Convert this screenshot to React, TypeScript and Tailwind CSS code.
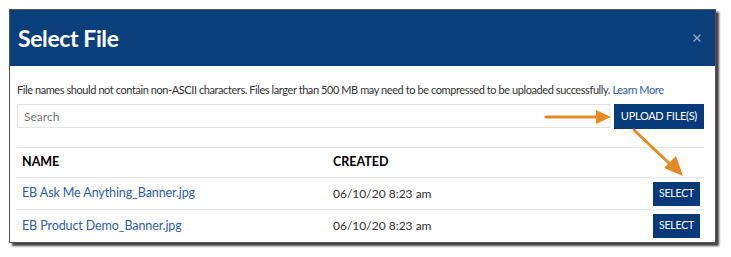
import { X } from "lucide-react";

const files = [
  { name: "EB Ask Me Anything_Banner.jpg", created: "06/10/20 8:23 am" },
  { name: "EB Product Demo_Banner.jpg", created: "06/10/20 8:23 am" },
];

export default function App() {
  return (
    <div className="w-[731px] h-[257px] bg-white pt-[9px] pl-[9px] font-['Lato',sans-serif] relative">
      {/* Modal */}
      <div className="w-[707px] bg-white border border-[#555] shadow-[3px_3px_2px_rgba(0,0,0,0.75)]">
        {/* Header */}
        <div className="h-[56px] bg-[#0b3f7c] flex items-center justify-between pl-[8px] pr-[12px]">
          <h1 className="text-white text-[23px] font-bold tracking-[-0.4px]">Select File</h1>
          <X className="w-[12px] h-[12px] text-[#8aa2c4]" strokeWidth={3} />
        </div>

        <div className="pl-[7px] pr-[11px] pt-[16px]">
          <p className="text-[11px] leading-[16px] text-[#333] whitespace-nowrap tracking-[-0.42px]">
            File names should not contain non-ASCII characters. Files larger than 500 MB may need to be compressed to be uploaded successfully.{" "}
            <a className="text-[#2a5ea8]">Learn More</a>
          </p>

          <div className="flex gap-[4px] mt-[6px]">
            <input
              placeholder="Search"
              className="flex-1 h-[24px] border border-[#e4e4e4] px-[6px] text-[12px] placeholder:text-[#777] outline-none"
            />
            <button className="h-[25px] px-[7px] bg-[#063a7a] text-white text-[11px] tracking-[-0.3px]">
              UPLOAD FILE(S)
            </button>
          </div>

          {/* Table */}
          <div className="mt-[18px] border-t border-[#e6e6e6]">
            <div className="flex items-center h-[30px] border-b border-[#e6e6e6] text-[12.5px] font-bold text-black">
              <div className="w-[316px] pl-[5px]">NAME</div>
              <div className="flex-1">CREATED</div>
            </div>
            {files.map((f, i) => (
              <div
                key={f.name}
                className={`flex items-center h-[32px] text-[12px] ${i === 0 ? "border-b border-[#e6e6e6]" : ""}`}
              >
                <div className="w-[316px] pl-[5px] text-[12.5px] text-[#2a5ea8] tracking-[-0.1px]">{f.name}</div>
                <div className="flex-1 text-[#333]">{f.created}</div>
                <button className="h-[24px] w-[47px] mr-[4px] bg-[#063a7a] text-white text-[10.5px] tracking-[-0.2px]">
                  SELECT
                </button>
              </div>
            ))}
          </div>
        </div>
      </div>

      {/* Annotation arrows */}
      <svg className="absolute left-0 top-0 pointer-events-none" width="731" height="257">
        <line x1="546" y1="117" x2="598" y2="117" stroke="#e48b26" strokeWidth="3" strokeLinecap="round" />
        <polygon points="596,110 611,117 596,124" fill="#e48b26" />
        <line x1="634" y1="130" x2="672" y2="166" stroke="#e48b26" strokeWidth="3" strokeLinecap="round" />
        <polygon points="664,168 676,156 683,176" fill="#e48b26" />
      </svg>
    </div>
  );
}
